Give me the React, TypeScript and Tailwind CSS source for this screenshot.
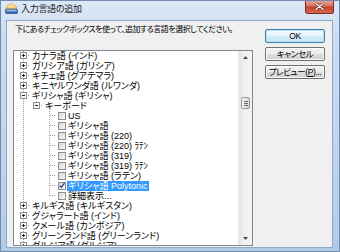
import React from "react";

type Kind = "none" | "line" | "tee" | "ell";
type Btn = "plus" | "minus" | undefined;

function Cell({ kind, btn }: { kind: Kind; btn?: Btn }) {
  const c = "#a0a0a0";
  return (
    <svg width="13" height="10" className="block shrink-0">
      {(kind === "line" || kind === "tee") && (
        <line x1="6.5" y1="0" x2="6.5" y2="10" stroke={c} strokeDasharray="1 1" />
      )}
      {kind === "ell" && (
        <line x1="6.5" y1="0" x2="6.5" y2="5" stroke={c} strokeDasharray="1 1" />
      )}
      {(kind === "tee" || kind === "ell") && (
        <line x1="7" y1="4.5" x2="13" y2="4.5" stroke={c} strokeDasharray="1 1" />
      )}
      {btn && (
        <g>
          <rect x="3.5" y="1.5" width="6" height="6" fill="#f7f7f7" stroke="#8f8f8f" />
          <line x1="5" y1="4.5" x2="8" y2="4.5" stroke="#222" />
          {btn === "plus" && <line x1="6.5" y1="3" x2="6.5" y2="6" stroke="#222" />}
        </g>
      )}
    </svg>
  );
}

function CheckBox({ checked }: { checked?: boolean }) {
  return (
    <span className="w-[8px] h-[8px] shrink-0 border border-[#8e8f8f] bg-[linear-gradient(135deg,#d3d7dc,#f8f8f8)] flex items-center justify-center">
      {checked && (
        <svg width="7" height="7" viewBox="0 0 7 7" className="block -mt-[1px]">
          <path d="M0.8 3.6 L2.7 5.6 L6.4 0.8" stroke="#1f3a6a" strokeWidth="1.4" fill="none" />
        </svg>
      )}
    </span>
  );
}

type Row = {
  cells: { k: Kind; b?: Btn }[];
  text: string;
  check?: "off" | "on";
  selected?: boolean;
};

const L0 = (text: string, b: Btn = "plus"): Row => ({ cells: [{ k: "tee", b }], text });
const L2 = (text: string, last = false, on = false, selected = false): Row => ({
  cells: [{ k: "line" }, { k: "none" }, { k: last ? "ell" : "tee" }],
  text,
  check: on ? "on" : "off",
  selected,
});

const rows: Row[] = [
  L0("カナラ語 (インド)"),
  L0("ガリシア語 (ガリシア)"),
  L0("キチェ語 (グアテマラ)"),
  L0("キニヤルワンダ語 (ルワンダ)"),
  L0("ギリシャ語 (ギリシャ)", "minus"),
  { cells: [{ k: "line" }, { k: "ell", b: "minus" }], text: "キーボード" },
  L2("US"),
  L2("ギリシャ語"),
  L2("ギリシャ語 (220)"),
  L2("ギリシャ語 (220) ﾗﾃﾝ"),
  L2("ギリシャ語 (319)"),
  L2("ギリシャ語 (319) ﾗﾃﾝ"),
  L2("ギリシャ語 (ラテン)"),
  L2("ギリシャ語 Polytonic", false, true, true),
  L2("詳細表示...", true),
  L0("キルギス語 (キルギスタン)"),
  L0("グジャラート語 (インド)"),
  L0("クメール語 (カンボジア)"),
  L0("グリーンランド語 (グリーンランド)"),
  L0("グルジア語 (グルジア)"),
];

function TreeRow({ r }: { r: Row }) {
  return (
    <div className="h-[10px] flex items-center pl-[3px] shrink-0">
      {r.cells.map((c, i) => (
        <Cell key={i} kind={c.k} btn={c.b} />
      ))}
      {r.check && (
        <span className="ml-[2px]">
          <CheckBox checked={r.check === "on"} />
        </span>
      )}
      <span
        className={
          "ml-[1px] px-[1px] h-[10px] leading-[10px] whitespace-nowrap " +
          (r.selected ? "bg-[#3399ff] text-white" : "text-black")
        }
      >
        {r.text}
      </span>
    </div>
  );
}

function Button({ label, def }: { label: React.ReactNode; def?: boolean }) {
  return (
    <div
      className={
        "w-[60px] h-[14px] rounded-[2px] border flex items-center justify-center text-[8.5px] leading-[10px] text-black " +
        (def
          ? "border-[#3c7fb1] bg-[linear-gradient(to_bottom,#f4fafe_0%,#e6f3fb_50%,#d3ebf9_51%,#c4e4f7_100%)] shadow-[inset_0_0_0_1px_#b9e2f8]"
          : "border-[#707070] bg-[linear-gradient(to_bottom,#f2f2f2_0%,#ebebeb_50%,#dddddd_51%,#cfcfcf_100%)] shadow-[inset_0_0_0_1px_#fbfbfb]")
      }
    >
      {label}
    </div>
  );
}

function TitleIcon() {
  return (
    <svg width="13" height="11" viewBox="0 0 13 11" className="block">
      <defs>
        <linearGradient id="sunG" x1="0" y1="0" x2="0" y2="1">
          <stop offset="0" stopColor="#fff1a8" />
          <stop offset="1" stopColor="#e9a53a" />
        </linearGradient>
        <linearGradient id="kbG" x1="0" y1="0" x2="0" y2="1">
          <stop offset="0" stopColor="#7fb2ea" />
          <stop offset="1" stopColor="#1f4f9e" />
        </linearGradient>
      </defs>
      <ellipse cx="6.5" cy="5" rx="5" ry="4" fill="url(#sunG)" stroke="#c98a2a" strokeWidth="0.6" />
      <rect x="0.5" y="6" width="12" height="4.5" rx="1" fill="url(#kbG)" stroke="#1b3f7a" strokeWidth="0.6" />
      <line x1="2" y1="7.6" x2="11" y2="7.6" stroke="#cfe3fb" strokeWidth="0.6" />
    </svg>
  );
}

export default function App() {
  return (
    <div className="w-[340px] h-[252px] flex flex-col border border-[#6f8cb0] bg-[linear-gradient(to_bottom,#dce8f6_0%,#cbdcf0_15%,#c0d4ec_60%,#b3cbe8_100%)] font-['Liberation_Sans','Noto_Sans_CJK_JP',sans-serif] [font-feature-settings:'palt'] overflow-hidden">
      {/* title bar */}
      <div className="h-[19px] flex items-start shrink-0">
        <div className="ml-[4px] mt-[2px]">
          <TitleIcon />
        </div>
        <div className="ml-[3px] mt-[3px] text-[9px] leading-[10px] text-[#1a1a1a] tracking-[-0.3px] whitespace-nowrap">
          入力言語の追加
        </div>
        <div className="ml-auto mr-[5px] -mt-[1px] w-[29px] h-[14px] rounded-b-[3px] border border-[#7a2c22] border-t-0 bg-[linear-gradient(to_bottom,#e9a99c_0%,#d8735f_45%,#c2412c_55%,#d46a4f_100%)] flex items-center justify-center">
          <svg width="9" height="7" viewBox="0 0 9 7" className="block">
            <path d="M1 0.8 L8 6.2 M8 0.8 L1 6.2" stroke="#5a1d14" strokeWidth="2.6" strokeLinecap="round" />
            <path d="M1 0.8 L8 6.2 M8 0.8 L1 6.2" stroke="#ffffff" strokeWidth="1.4" strokeLinecap="round" />
          </svg>
        </div>
      </div>
      {/* client area */}
      <div className="flex-1 ml-[5px] mr-[6px] mb-[3px] bg-[#f0f0f0] border border-[#8ea9c9] flex min-h-0">
        <div className="pl-[6px] pt-[4px] flex flex-col">
          <div className="ml-[2px] h-[10px] text-[8px] leading-[10px] text-black tracking-[-0.5px] whitespace-nowrap">
            下にあるチェックボックスを使って、追加する言語を選択してください。
          </div>
          <div className="mt-[15px] w-[240px] h-[196px] border border-[#828790] bg-white flex">
            <div className="flex-1 overflow-hidden flex flex-col text-[9px] tracking-[0px]">
              {rows.map((r, i) => (
                <TreeRow key={i} r={r} />
              ))}
            </div>
            <div className="w-[14px] flex flex-col bg-[linear-gradient(to_right,#e3e3e3,#f2f2f2_40%,#f2f2f2)] border-l border-[#ebebeb]">
              <div className="h-[13px] flex items-center justify-center">
                <svg width="5" height="3" viewBox="0 0 5 3" className="block">
                  <path d="M0 3 L2.5 0 L5 3 Z" fill="#4a4a4a" />
                </svg>
              </div>
              <div className="flex-1 flex flex-col">
                <div className="h-[33px]" />
                <div className="mx-[2px] h-[12px] rounded-[2px] border border-[#989898] bg-[linear-gradient(to_right,#f3f3f3,#e4e4e4_50%,#d6d6d6)] flex flex-col items-center justify-center gap-[1px]">
                  <div className="w-[4px] h-[1px] bg-[#6f6f6f]" />
                  <div className="w-[4px] h-[1px] bg-[#6f6f6f]" />
                  <div className="w-[4px] h-[1px] bg-[#6f6f6f]" />
                </div>
              </div>
              <div className="h-[13px] flex items-center justify-center">
                <svg width="5" height="3" viewBox="0 0 5 3" className="block">
                  <path d="M0 0 L2.5 3 L5 0 Z" fill="#4a4a4a" />
                </svg>
              </div>
            </div>
          </div>
        </div>
        <div className="ml-[12px] pt-[8px] flex flex-col gap-[4px] tracking-[-0.4px]">
          <Button label="OK" def />
          <Button label="キャンセル" />
          <Button
            label={
              <span>
                プレビュー(<span className="underline">P</span>)...
              </span>
            }
          />
        </div>
      </div>
    </div>
  );
}
